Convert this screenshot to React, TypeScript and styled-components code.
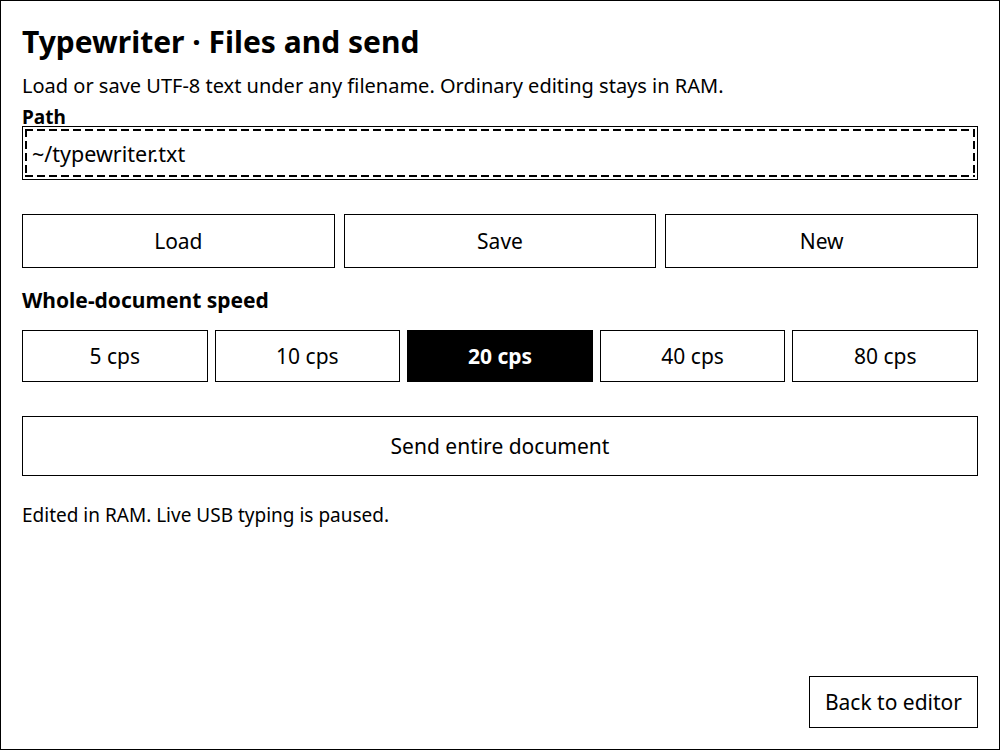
import React from "react";
import styled, { createGlobalStyle } from "styled-components";

const Global = createGlobalStyle`
  html, body { margin: 0; padding: 0; background: #fff; }
  body { font-family: "Noto Sans", "DejaVu Sans", sans-serif; color: #000; }
  * { box-sizing: border-box; }
`;

const Page = styled.div`
  width: 1000px;
  height: 750px;
  border: 1px solid #000;
  padding: 21px;
  display: flex;
  flex-direction: column;
  background: #fff;
`;

const Title = styled.h1`
  margin: 0;
  font-size: 30px;
  line-height: 40px;
  font-weight: 700;
`;

const Lead = styled.p`
  margin: 10px 0 0;
  font-size: 20px;
  line-height: 28px;
`;

const FieldLabel = styled.label`
  margin-top: 8px;
  font-size: 19px;
  line-height: 18px;
  font-weight: 700;
`;

const hDash = "repeating-linear-gradient(90deg, #000 0 8px, transparent 8px 12px)";
const vDash = "repeating-linear-gradient(180deg, #000 0 8px, transparent 8px 12px)";

const PathInput = styled.input`
  display: block;
  width: 100%;
  height: 54px;
  margin: 0;
  padding: 0 9px;
  border: 1px solid #000;
  border-radius: 0;
  outline: none;
  font-family: inherit;
  font-size: 21.5px;
  color: #000;
  background-color: #fff;
  background-image: ${hDash}, ${hDash}, ${vDash}, ${vDash};
  background-repeat: no-repeat;
  background-size: calc(100% - 4px) 2px, calc(100% - 4px) 2px, 2px calc(100% - 4px),
    2px calc(100% - 4px);
  background-position: left 2px top 2px, left 2px bottom 2px, left 2px top 2px,
    right 2px top 2px;
`;

const Row = styled.div<{ $cols: number; $gap: number; $top: number }>`
  display: grid;
  grid-template-columns: repeat(${(p) => p.$cols}, 1fr);
  gap: ${(p) => p.$gap}px;
  margin-top: ${(p) => p.$top}px;
`;

const Button = styled.button<{ $h: number; $active?: boolean }>`
  height: ${(p) => p.$h}px;
  margin: 0;
  padding: 0 15px;
  border: 1px solid #000;
  border-radius: 0;
  background: ${(p) => (p.$active ? "#000" : "#fff")};
  color: ${(p) => (p.$active ? "#fff" : "#000")};
  font-family: inherit;
  font-size: 21px;
  font-weight: ${(p) => (p.$active ? 700 : 400)};
  cursor: pointer;
`;

const SectionHeading = styled.h2`
  margin: 20px 0 0;
  font-size: 21px;
  line-height: 24px;
  font-weight: 700;
`;

const WideButton = styled(Button)`
  width: 100%;
  margin-top: 34px;
`;

const Status = styled.p`
  margin: 25px 0 0;
  font-size: 19px;
  line-height: 28px;
`;

const Footer = styled.div`
  margin-top: auto;
  display: flex;
  justify-content: flex-end;
`;

const speeds = [5, 10, 20, 40, 80];

export default function App() {
  return (
    <>
      <Global />
      <Page>
        <Title>Typewriter · Files and send</Title>
        <Lead>Load or save UTF-8 text under any filename. Ordinary editing stays in RAM.</Lead>
        <FieldLabel htmlFor="path">Path</FieldLabel>
        <PathInput id="path" defaultValue="~/typewriter.txt" />
        <Row $cols={3} $gap={9} $top={34}>
          <Button $h={54}>Load</Button>
          <Button $h={54}>Save</Button>
          <Button $h={54}>New</Button>
        </Row>
        <SectionHeading>Whole-document speed</SectionHeading>
        <Row $cols={5} $gap={7} $top={18}>
          {speeds.map((s) => (
            <Button key={s} $h={52} $active={s === 20}>
              {s} cps
            </Button>
          ))}
        </Row>
        <WideButton $h={60}>Send entire document</WideButton>
        <Status>Edited in RAM. Live USB typing is paused.</Status>
        <Footer>
          <Button $h={52}>Back to editor</Button>
        </Footer>
      </Page>
    </>
  );
}
